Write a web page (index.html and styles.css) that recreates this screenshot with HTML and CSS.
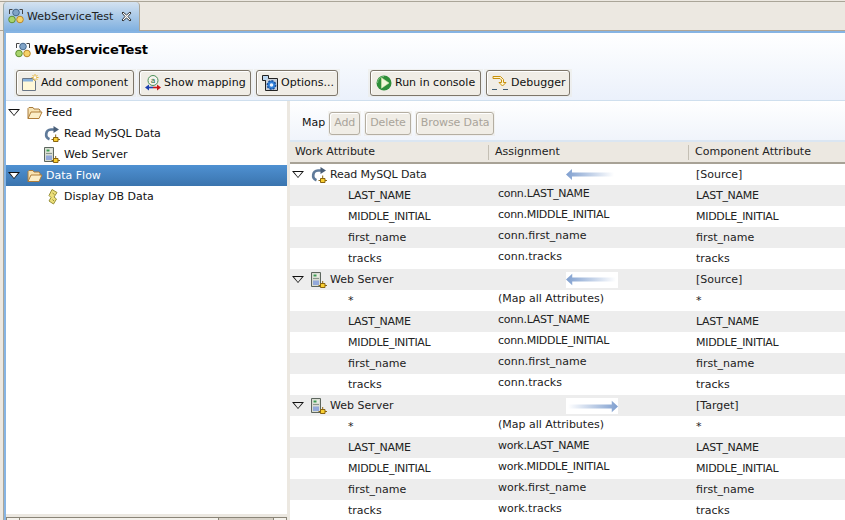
FILE: index.html
```html
<!DOCTYPE html>
<html lang="en">
<head>
<meta charset="utf-8">
<title>WebServiceTest</title>
<link rel="stylesheet" href="styles.css">
</head>
<body>
<svg class="defs" width="0" height="0" aria-hidden="true">
  <defs>
    <symbol id="i-app" viewBox="0 0 16 16">
      <path d="M1.500 6V1.500h3M11.500 1.500h3V6" fill="none" stroke="#444" stroke-width="1"/>
      <circle cx="8" cy="4.500" r="3.300" fill="#7fa3c8" stroke="#46688c"/>
      <circle cx="4" cy="11.500" r="3.300" fill="#a8d46c" stroke="#5f8f34"/>
      <circle cx="12" cy="11.500" r="3.300" fill="#f6d268" stroke="#b8862c"/>
    </symbol>
    <symbol id="i-close" viewBox="0 0 11 11">
      <path d="M1 2 2 1 5.500 4 9 1 10 2 7 5.500 10 9 9 10 5.500 7 2 10 1 9 4 5.500Z" fill="#fff" stroke="#222" stroke-width=".9"/>
    </symbol>
    <symbol id="i-add" viewBox="0 0 18 18">
      <path d="M1.500 4.500h10l3 2.500v9.500H1.500z" fill="#fff8d8" stroke="#6a7686"/>
      <path d="M2 5h10v2.500H2z" fill="#86b0dc"/>
      <path d="M14 0v7M10.500 3.500h7M11.500 1l5 5M16.500 1l-5 5" stroke="#e8b53a" stroke-width="1"/>
      <circle cx="14" cy="3.500" r="1.300" fill="#fff"/>
    </symbol>
    <symbol id="i-map" viewBox="0 0 16 16">
      <circle cx="8" cy="5.500" r="5" fill="#f6f4ee" stroke="#4a8f58"/>
      <text x="8" y="8" font-size="7.500" text-anchor="middle" fill="#2a6e3a" font-family="DejaVu Sans">a</text>
      <path d="M0 12.500 4 9.500v6z" fill="#1d3fb0"/>
      <path d="M16 12.500 12 9.500v6z" fill="#c81818"/>
      <path d="M4 12.500h4" stroke="#1d3fb0" stroke-width="1.600"/>
      <path d="M8 12.500h4" stroke="#c81818" stroke-width="1.600"/>
    </symbol>
    <symbol id="i-opt" viewBox="0 0 16 16">
      <path d="M.5 .5h6v5h-6z" fill="#bcd8f2" stroke="#222"/>
      <path d="M3.500 5.500v10h12V3.500h-9" fill="#c9d0d8" stroke="#222"/>
      <circle cx="9.500" cy="10" r="4.200" fill="#2f7fd8" stroke="#1a4f9c" stroke-width="1.400" stroke-dasharray="2 1.200"/>
      <circle cx="9.500" cy="10" r="1.800" fill="#e8f2ff"/>
    </symbol>
    <symbol id="i-run" viewBox="0 0 16 16">
      <circle cx="8" cy="8" r="7.500" fill="#2f8f3a"/>
      <path d="M1.500 8a6.500 6.500 0 0 1 6.500-6.500" stroke="#7cc17f" fill="none"/>
      <path d="M5.500 2.800v10.400L13 8z" fill="#f1f7d8" stroke="#d4e6a8" stroke-width=".6"/>
    </symbol>
    <symbol id="i-debug" viewBox="0 0 16 16">
      <path d="M1 1.500h7.500l3 3v3h2.500L10.500 11 7 7.500h2.500V5L8 3.500H1z" fill="#fff6cf" stroke="#c8900e"/>
      <path d="M0 14.500h5M11 14.500h5" stroke="#3d5a73" stroke-width="1.200"/>
    </symbol>
    <symbol id="i-folder" viewBox="0 0 16 14">
      <path d="M1 12.500V2.500l1-1h4l1 1.500h5l1 1v2" fill="#f7e3b2" stroke="#a87b3c"/>
      <path d="M1 12.500 4 6h11l-3 6.500z" fill="#fbeec8" stroke="#b07e3a"/>
    </symbol>
    <symbol id="i-read" viewBox="0 0 16 16">
      <path d="M10.500 3.500H7A5 5 0 0 0 5.500 13.200" fill="none" stroke="#5f7a9a" stroke-width="2.700"/>
      <path d="M9.500 0 15 3.500 9.500 7z" fill="#4a5f78"/>
      <path d="M9.500 11.500h4.500v4H9.500z" fill="#f9cf30" stroke="#8a6510"/>
      <path d="M11.700 8.500v3M7.500 13.500h2M14 13.500h2" stroke="#8a6510"/>
    </symbol>
    <symbol id="i-web" viewBox="0 0 16 16">
      <path d="M.5 .5h9v14h-9z" fill="#d9ddd2" stroke="#5d665e"/>
      <path d="M2 2h6v3H2z" fill="#e8ece2"/>
      <path d="M2.500 2.500h3v2h-3z" fill="#3c9a52"/>
      <path d="M2 6.500h6" stroke="#8a968c"/>
      <path d="M2 8.500h6v4.500H2z" fill="#93a9da"/>
      <path d="M9.500 11.500h4.500v4H9.500z" fill="#f9cf30" stroke="#8a6510"/>
      <path d="M11.700 9v2.500M7.500 13.500h2M14 13.500h2" stroke="#8a6510"/>
    </symbol>
    <symbol id="i-script" viewBox="0 0 16 16">
      <path d="M8 .5 13 3.500 10 8 12.500 10 9.500 15 5 12 7 8.500 5 6.500Z" fill="#ecdf7a" stroke="#98903a"/>
      <path d="M8.500 4 10.500 5.500M8.500 10.500 10 12" stroke="#98903a"/>
    </symbol>
    <linearGradient id="fade-left" x1="0" x2="1" y1="0" y2="0">
      <stop offset="0" stop-color="#7f9fcf"/><stop offset="1" stop-color="#7f9fcf" stop-opacity="0"/>
    </linearGradient>
    <linearGradient id="fade-right" x1="1" x2="0" y1="0" y2="0">
      <stop offset="0" stop-color="#7f9fcf"/><stop offset="1" stop-color="#7f9fcf" stop-opacity="0"/>
    </linearGradient>
    <symbol id="i-arrow-left" viewBox="0 0 50 12">
      <path d="M6 0v3.500h42v4H6V11L0 5.500z" fill="url(#fade-left)"/>
    </symbol>
    <symbol id="i-arrow-right" viewBox="0 0 50 12">
      <path d="M44 1v3.500H2v4h42V12l6-5.500z" fill="url(#fade-right)"/>
    </symbol>
  </defs>
</svg>

<div class="window">
  <div class="tabbar">
    <div class="tab">
      <svg class="icon16"><use href="#i-app"/></svg>
      <span class="tab-label">WebServiceTest</span>
      <svg class="icon-close"><use href="#i-close"/></svg>
    </div>
  </div>
  <div class="editor">
    <header class="head">
      <h1 class="title"><svg class="icon16"><use href="#i-app"/></svg>WebServiceTest</h1>
      <div class="toolbar">
        <div class="btn-wrap"><button class="btn b-add"><svg class="icon18"><use href="#i-add"/></svg>Add component</button></div>
        <div class="btn-wrap"><button class="btn b-map"><svg class="icon16"><use href="#i-map"/></svg>Show mapping</button></div>
        <div class="btn-wrap"><button class="btn b-opt"><svg class="icon16"><use href="#i-opt"/></svg>Options...</button></div>
        <div class="btn-wrap spaced"><button class="btn b-run"><svg class="icon16"><use href="#i-run"/></svg>Run in console</button></div>
        <div class="btn-wrap"><button class="btn b-dbg"><svg class="icon16"><use href="#i-debug"/></svg>Debugger</button></div>
      </div>
    </header>
    <div class="split">
      <aside class="left">
        <ul class="tree">
          <li class="node"><span class="twist hollow"></span><svg class="icon-folder"><use href="#i-folder"/></svg>Feed</li>
          <li class="node child"><svg class="icon16"><use href="#i-read"/></svg><span class="caps-ish">Read MySQL Data</span></li>
          <li class="node child"><svg class="icon16"><use href="#i-web"/></svg>Web Server</li>
          <li class="node selected"><span class="twist hollow"></span><svg class="icon-folder"><use href="#i-folder"/></svg>Data Flow</li>
          <li class="node child"><svg class="icon16"><use href="#i-script"/></svg>Display DB Data</li>
        </ul>
        <div class="hscroll"><span class="sc-btn"></span><span class="sc-track"><span class="sc-thumb"></span></span><span class="sc-btn"></span></div>
      </aside>
      <main class="right">
        <div class="maptools">
          <span class="map-label">Map</span>
          <div class="btn-wrap"><button class="btn off" disabled>Add</button></div>
          <div class="btn-wrap"><button class="btn off" disabled>Delete</button></div>
          <div class="btn-wrap"><button class="btn off" disabled>Browse Data</button></div>
        </div>
        <div class="table">
          <div class="thead">
            <div class="th">Work Attribute</div>
            <div class="th sep">Assignment</div>
            <div class="th sep">Component Attribute</div>
          </div>
          <div class="row group"><div class="c1"><span class="twist hollow"></span><svg class="icon16"><use href="#i-read"/></svg><span class="caps-ish">Read MySQL Data</span></div><div class="c2 arrowcell"><svg class="arrow"><use href="#i-arrow-left"/></svg></div><div class="c3">[Source]</div></div>
          <div class="row alt"><div class="c1 leaf caps">LAST_NAME</div><div class="c2 caps">conn.LAST_NAME</div><div class="c3 caps">LAST_NAME</div></div>
          <div class="row"><div class="c1 leaf caps">MIDDLE_INITIAL</div><div class="c2 caps">conn.MIDDLE_INITIAL</div><div class="c3 caps">MIDDLE_INITIAL</div></div>
          <div class="row alt"><div class="c1 leaf">first_name</div><div class="c2">conn.first_name</div><div class="c3">first_name</div></div>
          <div class="row"><div class="c1 leaf">tracks</div><div class="c2">conn.tracks</div><div class="c3">tracks</div></div>
          <div class="row alt group"><div class="c1"><span class="twist hollow"></span><svg class="icon16"><use href="#i-web"/></svg>Web Server</div><div class="c2 arrowcell"><svg class="arrow white"><use href="#i-arrow-left"/></svg></div><div class="c3">[Source]</div></div>
          <div class="row"><div class="c1 leaf">*</div><div class="c2">(Map all Attributes)</div><div class="c3">*</div></div>
          <div class="row alt"><div class="c1 leaf caps">LAST_NAME</div><div class="c2 caps">conn.LAST_NAME</div><div class="c3 caps">LAST_NAME</div></div>
          <div class="row"><div class="c1 leaf caps">MIDDLE_INITIAL</div><div class="c2 caps">conn.MIDDLE_INITIAL</div><div class="c3 caps">MIDDLE_INITIAL</div></div>
          <div class="row alt"><div class="c1 leaf">first_name</div><div class="c2">conn.first_name</div><div class="c3">first_name</div></div>
          <div class="row"><div class="c1 leaf">tracks</div><div class="c2">conn.tracks</div><div class="c3">tracks</div></div>
          <div class="row alt group"><div class="c1"><span class="twist hollow"></span><svg class="icon16"><use href="#i-web"/></svg>Web Server</div><div class="c2 arrowcell"><svg class="arrow white"><use href="#i-arrow-right"/></svg></div><div class="c3">[Target]</div></div>
          <div class="row"><div class="c1 leaf">*</div><div class="c2">(Map all Attributes)</div><div class="c3">*</div></div>
          <div class="row alt"><div class="c1 leaf caps">LAST_NAME</div><div class="c2 caps">work.LAST_NAME</div><div class="c3 caps">LAST_NAME</div></div>
          <div class="row"><div class="c1 leaf caps">MIDDLE_INITIAL</div><div class="c2 caps">work.MIDDLE_INITIAL</div><div class="c3 caps">MIDDLE_INITIAL</div></div>
          <div class="row alt"><div class="c1 leaf">first_name</div><div class="c2">work.first_name</div><div class="c3">first_name</div></div>
          <div class="row"><div class="c1 leaf">tracks</div><div class="c2">work.tracks</div><div class="c3">tracks</div></div>
        </div>
      </main>
    </div>
  </div>
</div>
</body>
</html>
```

FILE: styles.css
```css
* { box-sizing: border-box; }
html, body { margin: 0; height: 520px; overflow: hidden; }
body { font: 11px/14px "DejaVu Sans", sans-serif; color: #111; background: #ece8e1; }
.defs { position: absolute; }
svg { display: block; flex: none; }
.icon16 { width: 16px; height: 16px; }
.icon18 { width: 18px; height: 18px; }
.icon-close { width: 11px; height: 11px; }
.icon-folder { width: 16px; height: 14px; }
.caps { letter-spacing: -.3px; }
.caps-ish { letter-spacing: -.13px; }

.window { height: 520px; display: flex; flex-direction: column; }

.tabbar { height: 30px; margin-top: 1px; border-top: 1px solid #aaa598; border-bottom: 1px solid #b0a697; background: #ece8e1; display: flex; padding-left: 3px; flex: none; }
.tab { width: 137px; height: 29px; padding: 6px 0 0 4px; display: flex; align-items: flex-start; gap: 3px; background: linear-gradient(#d4e2f0, #7fb0e0); border-left: 1px solid #9aa; border-right: 1px solid #aaa598; border-radius: 4px 4px 0 0; }
.tab-label { width: 88px; line-height: 17px; color: #222; font-size: 11px; }
.tab .icon-close { margin: 3px 0 0 3px; }

.editor { flex: 1; min-height: 0; margin-left: 4px; border-left: 2px solid #86b4e3; border-top: 2px solid #86b4e3; box-shadow: -1px 0 0 #aaa598; display: flex; flex-direction: column; background: #ece8e1; }

.head { height: 68px; flex: none; background: linear-gradient(#fff, #ebf1fb); border-bottom: 1px solid #cfdfee; padding: 9px 0 0 8px; }
.title { margin: 0 0 0 1px; display: flex; align-items: center; gap: 3px; font-size: 13px; font-weight: bold; line-height: 16px; letter-spacing: -.15px; color: #000; }
.toolbar { display: flex; margin-top: 11px; }
.btn-wrap { padding: 1px 2px; margin-right: 1px; background: rgba(236, 232, 225, .45); }
.btn-wrap.spaced { margin-left: 27px; }
.btn { height: 26px; display: flex; align-items: center; justify-content: flex-start; gap: 3px; padding: 0 0 0 5px; white-space: nowrap; font: 11px/14px "DejaVu Sans", sans-serif; color: #111; background: #f0ede6; border: 1px solid #7d766a; border-radius: 3px; box-shadow: inset 1px 1px 0 #fff; }
.b-add { width: 118px; gap: 2px; padding-left: 4px; }
.b-map { width: 112px; }
.b-opt { width: 82px; gap: 3px; }
.b-run { width: 111px; }
.b-dbg { width: 84px; }
.btn.off { color: #a9a49a; border-color: #b4aea2; letter-spacing: -.1px; padding: 0 4px; }

.split { flex: 1; min-height: 0; display: flex; }
.left { width: 281px; flex: none; display: flex; flex-direction: column; background: #fff; }
.tree { list-style: none; margin: 0; padding: 1px 0 0; flex: 1; min-height: 0; }
.node { height: 21px; display: flex; align-items: center; gap: 3px; padding-left: 2px; }
.node .twist { margin-right: 4px; }
.node.child { padding-left: 38px; gap: 4px; }
.node.selected { background: linear-gradient(#4f91d2, #3a74ae); color: #fff; }
.twist { width: 0; height: 0; border-left: 6px solid transparent; border-right: 6px solid transparent; border-top: 7px solid #111; flex: none; position: relative; }
.twist.hollow::after { content: ""; position: absolute; left: -4px; top: -6px; border-left: 4px solid transparent; border-right: 4px solid transparent; border-top: 5px solid #fff; }
.alt .twist.hollow::after { border-top-color: #ededed; }

.hscroll { display: flex; height: 3px; flex: none; margin-top: 3px; box-shadow: 0 -3px 0 #ece8e1; background: #f4f1eb; border-top: 1px solid #8a8578; }
.sc-btn { width: 14px; flex: none; border-left: 1px solid #8a8578; border-right: 1px solid #8a8578; }
.sc-track { flex: 1; display: flex; justify-content: flex-end; }
.sc-thumb { width: 55px; background: #d6cfc4; border-left: 1px solid #8a8578; }

.right { flex: 1; min-width: 0; margin-left: 3px; display: flex; flex-direction: column; }
.maptools { height: 41px; flex: none; display: flex; align-items: center; padding: 5px 0 0 12px; background: linear-gradient(#fff, #f0f4fb); border-bottom: 2px solid #dbe6f2; }
.map-label { margin-right: 3px; }
.maptools .btn { height: 23px; }
.maptools .btn-wrap { padding: 1px; margin-right: 3px; }

.table { flex: 1; min-height: 0; background: #fff; }
.thead, .row { display: grid; grid-template-columns: 198px 200px 1fr; }
.thead { height: 22px; background: #ece8e1; border-bottom: 2px solid #a8a296; color: #222; }
.th { padding: 3px 0 0 5px; }
.th.sep { position: relative; padding-left: 7px; }
.th.sep::before { content: ""; position: absolute; left: 0; top: 3px; height: 15px; width: 1px; background: #c4bfb4; }
.row { height: 21px; line-height: 21px; color: #222; }
.row.alt { background: #ededed; }
.c1 { display: flex; align-items: center; gap: 3px; padding-left: 2px; }
.c1 .twist { margin-right: 4px; }
.leaf { padding-left: 58px; }
.c2 { padding-left: 10px; margin-top: -2px; }
.c3 { padding-left: 8px; }
.arrowcell { margin-top: 0; padding-left: 78px; padding-top: 5px; }
.arrow { width: 50px; height: 12px; }
.arrow.white { background: #fff; width: 52px; height: 16px; margin-top: -2px; }
```
